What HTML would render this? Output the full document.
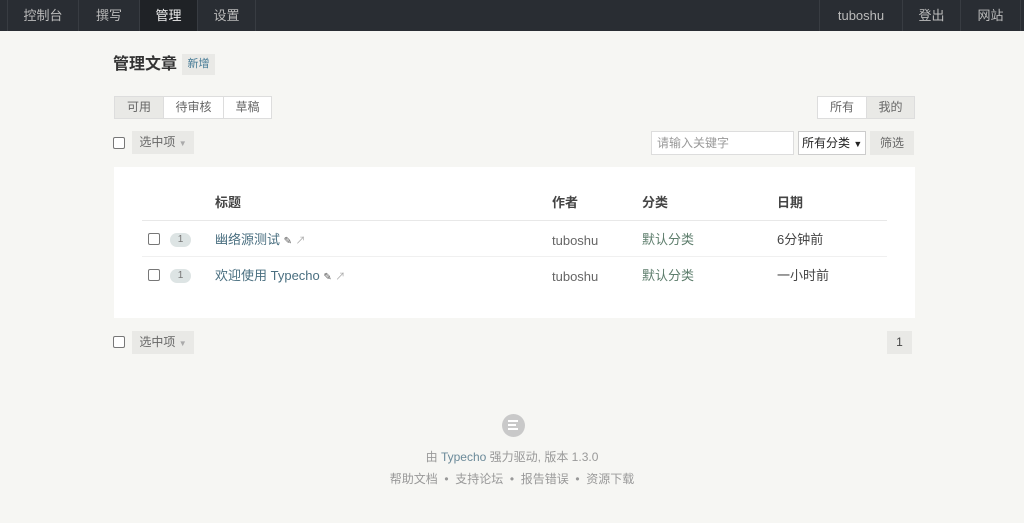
<!DOCTYPE html>
<html><head><meta charset="utf-8"><style>
*{margin:0;padding:0;box-sizing:border-box}
body{width:1024px;height:523px;background:#f6f6f3;font-family:"Liberation Sans","Noto Sans CJK SC",sans-serif;font-size:13px;color:#444;position:relative;overflow:hidden}
.a{position:absolute;line-height:16px}
.nav{left:0;top:0;width:1024px;height:31px;background:#292d33}
.ni{position:absolute;top:0;height:31px;line-height:31px;text-align:center;color:#bbb;font-size:13px;border-left:1px solid #383c42}
.btn{position:absolute;background:#e9e9e6;color:#666;text-align:center;font-size:12px}
.cb{position:absolute;width:12px;height:12px;border:1px solid #777;border-radius:2px;background:#fff}
.tab{position:absolute;top:96px;height:23px;line-height:21px;text-align:center;font-size:12px;border:1px solid #ddd;color:#666}
.badge{position:absolute;width:21px;height:14px;border-radius:7px;background:#dde4e4;color:#777;font-size:10px;text-align:center;line-height:14px}
.t{color:#4a6f80}.g{color:#666}.c{color:#5d7d6c}
</style></head><body>
<div class="a nav"></div>
<div class="ni" style="left:7px;width:71px">控制台</div>
<div class="ni" style="left:78px;width:61px">撰写</div>
<div class="ni" style="left:139px;width:58px;background:#1f2226;color:#eee">管理</div>
<div class="ni" style="left:197px;width:59px;border-right:1px solid #383c42">设置</div>
<div class="ni" style="left:819px;width:83px">tuboshu</div>
<div class="ni" style="left:902px;width:58px">登出</div>
<div class="ni" style="left:960px;width:61px;border-right:1px solid #383c42">网站</div>

<div class="a" style="left:113px;top:55px;font-size:16px;font-weight:bold;color:#333;line-height:20px">管理文章</div>
<div class="btn" style="left:182px;top:54px;width:33px;height:21px;line-height:21px;color:#467b96;font-size:11px">新增</div>

<div class="tab" style="left:114px;width:50px;background:#e9e9e6">可用</div>
<div class="tab" style="left:163px;width:61px;background:#fff">待审核</div>
<div class="tab" style="left:223px;width:49px;background:#fff">草稿</div>
<div class="tab" style="left:817px;width:50px;background:#fff">所有</div>
<div class="tab" style="left:866px;width:49px;background:#e9e9e6">我的</div>

<div class="cb" style="left:113px;top:137px"></div>
<div class="btn" style="left:132px;top:131px;width:62px;height:23px;line-height:23px">选中项 <span style="font-size:8px;color:#aaa">▼</span></div>
<div class="a" style="left:651px;top:131px;width:143px;height:24px;background:#fff;border:1px solid #ddd;color:#999;font-size:12px;line-height:22px;padding-left:5px">请输入关键字</div>
<div class="a" style="left:798px;top:131px;width:68px;height:24px;background:#fff;border:1px solid #ccc;color:#222;font-size:12px;line-height:22px;padding-left:3px">所有分类 <span style="font-size:9px">▼</span></div>
<div class="btn" style="left:870px;top:131px;width:44px;height:24px;line-height:24px">筛选</div>

<div class="a" style="left:114px;top:167px;width:801px;height:151px;background:#fff"></div>
<div class="a" style="left:215px;top:195px;font-weight:bold;color:#444">标题</div>
<div class="a" style="left:552px;top:195px;font-weight:bold;color:#444">作者</div>
<div class="a" style="left:642px;top:195px;font-weight:bold;color:#444">分类</div>
<div class="a" style="left:777px;top:195px;font-weight:bold;color:#444">日期</div>
<div class="a" style="left:142px;top:220px;width:745px;height:1px;background:#e8e8e8"></div>
<div class="a" style="left:142px;top:256px;width:745px;height:1px;background:#f0f0f0"></div>

<div class="cb" style="left:148px;top:233px"></div>
<div class="badge" style="left:170px;top:233px">1</div>
<div class="a t" style="left:215px;top:232px">幽络源测试 <span style="color:#555;font-size:10px">✎</span> <span style="color:#aaa;font-size:10px">↗</span></div>
<div class="a g" style="left:552px;top:233px">tuboshu</div>
<div class="a c" style="left:642px;top:232px">默认分类</div>
<div class="a" style="left:777px;top:232px;color:#444">6分钟前</div>

<div class="cb" style="left:148px;top:269px"></div>
<div class="badge" style="left:170px;top:269px">1</div>
<div class="a t" style="left:215px;top:268px">欢迎使用 Typecho <span style="color:#555;font-size:10px">✎</span> <span style="color:#aaa;font-size:10px">↗</span></div>
<div class="a g" style="left:552px;top:269px">tuboshu</div>
<div class="a c" style="left:642px;top:268px">默认分类</div>
<div class="a" style="left:777px;top:268px;color:#444">一小时前</div>

<div class="cb" style="left:113px;top:336px"></div>
<div class="btn" style="left:132px;top:331px;width:62px;height:23px;line-height:23px">选中项 <span style="font-size:8px;color:#aaa">▼</span></div>
<div class="btn" style="left:887px;top:331px;width:25px;height:23px;line-height:23px;color:#444">1</div>

<div class="a" style="left:502px;top:414px;width:23px;height:23px;border-radius:50%;background:#c9c9c9"></div>
<div class="a" style="left:508px;top:420px;width:10px;height:2px;background:#fff"></div>
<div class="a" style="left:508px;top:424px;width:8px;height:2px;background:#fff"></div>
<div class="a" style="left:508px;top:428px;width:10px;height:2px;background:#fff"></div>
<div class="a" style="left:0;top:449px;width:1024px;text-align:center;color:#999;font-size:12px">由 <span style="color:#6b8a99">Typecho</span> 强力驱动, 版本 1.3.0</div>
<div class="a" style="left:0;top:471px;width:1024px;text-align:center;color:#999;font-size:12px">帮助文档 &nbsp;•&nbsp; 支持论坛 &nbsp;•&nbsp; 报告错误 &nbsp;•&nbsp; 资源下载</div>
</body></html>
